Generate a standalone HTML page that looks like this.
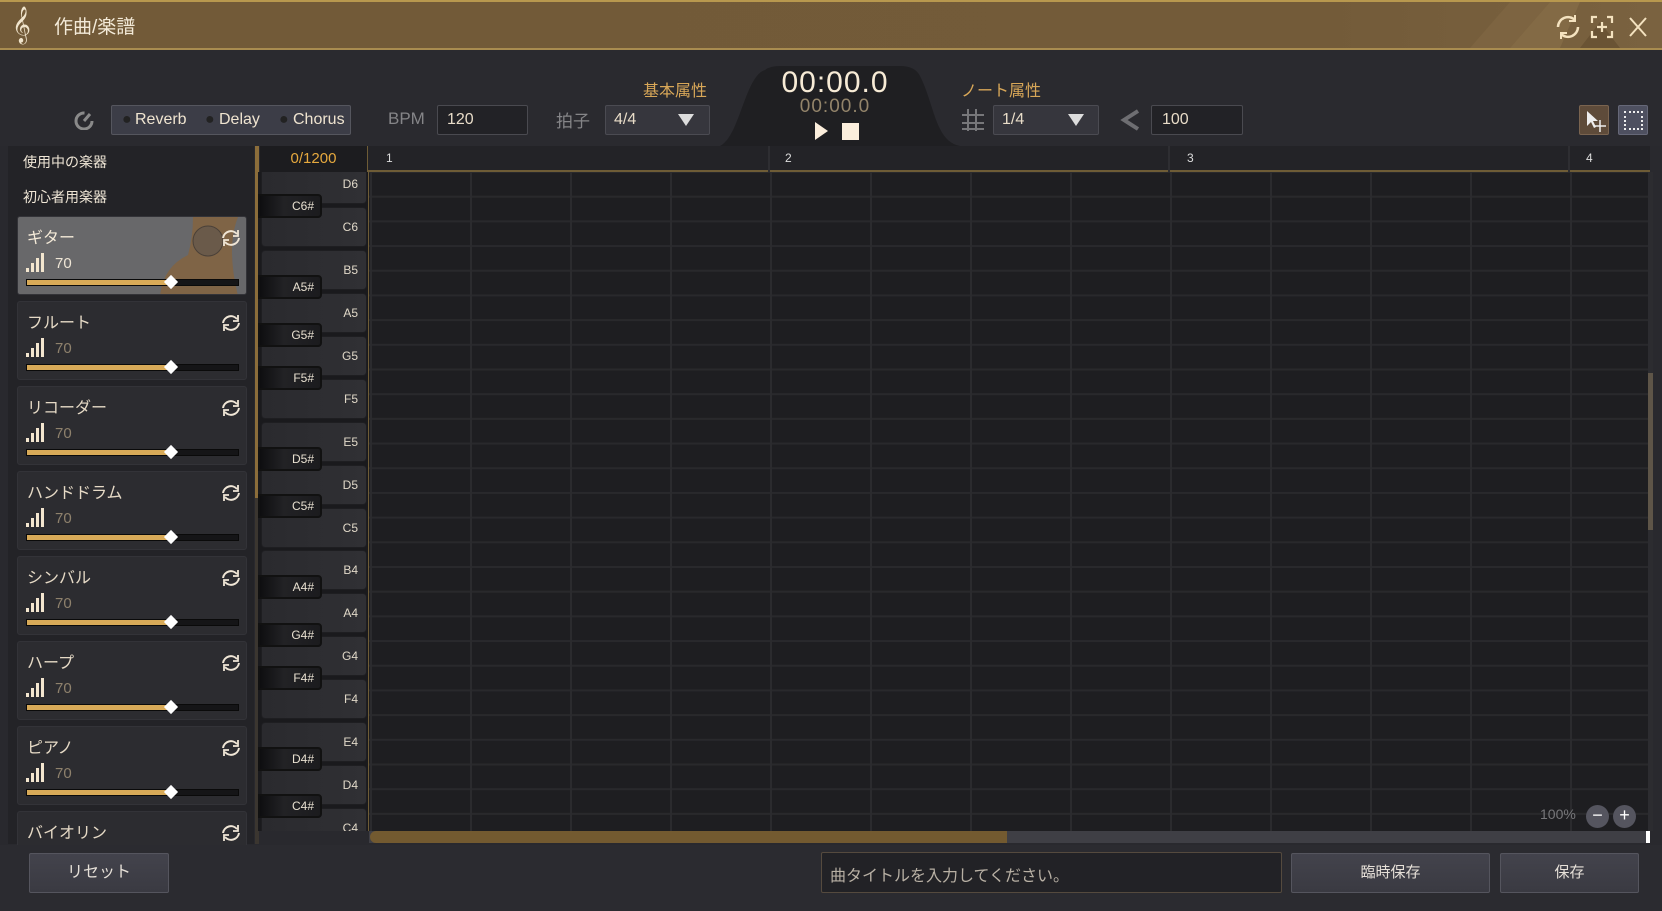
<!DOCTYPE html>
<html><head><meta charset="utf-8">
<style>
*{margin:0;padding:0;box-sizing:border-box}
body{width:1662px;height:911px;overflow:hidden;background:#29292e;font-family:"Liberation Sans","Noto Sans CJK JP",sans-serif;position:relative;color:#e8dcc8}
.a{position:absolute}
.title{left:0;top:0;width:1662px;height:50px;background:linear-gradient(90deg,#725a38,#735b39 80%,#7a6240);border-top:2px solid #b8984e;border-bottom:2px solid #a98c50}
.card{position:absolute;left:17px;width:230px;height:79px;background:#2c2c30;border-radius:3px;border:1px solid #333338;overflow:hidden}
.card .nm{position:absolute;left:9px;top:7px;font-size:16px;color:#e6dac6}
.card .v{position:absolute;left:37px;top:38px;font-size:15px;color:#8e816c}
.wk{position:absolute;left:261px;width:106px;height:40px;background:linear-gradient(90deg,#2a2a2e,#303034);border-radius:4px;border:1px solid #1e1e21;font-size:12px;color:#e0d8c8;text-align:right;padding-right:8px;line-height:38px}
.bk{position:absolute;left:258px;width:64px;height:24px;background:linear-gradient(90deg,#0e0e10,#222225 40%,#1b1b1e);border-radius:0 4px 4px 0;border:2px solid #111;font-size:12px;color:#e8e0d0;text-align:right;padding-right:6px;line-height:20px}
.btn{position:absolute;background:linear-gradient(#43434c,#3a3a42);border:1px solid #55555e;border-radius:2px;color:#e6e0d8;font-size:15px;text-align:center}
</style></head><body>

<div class="a title">
<svg class="a" style="left:1260px;top:0" width="402" height="46"><polygon points="210,46 250,0 290,0 250,46" fill="#7d6441"/><polygon points="250,46 290,0 320,0 300,46" fill="#836a45"/><polygon points="320,46 340,20 360,46" fill="#6a5334"/></svg>
<div class="a" style="left:12px;top:3px;font-size:32px;color:#f0e4cc;font-family:'DejaVu Serif',serif">𝄞</div>
<div class="a" style="left:54px;top:10px;font-size:19px;color:#f3ead8">作曲/楽譜</div>
<svg class="a" style="left:1554px;top:10px" width="100" height="30" fill="none" stroke="#f4e2bf" stroke-width="2.5">
<path d="M4 15a10 10 0 0 1 17-7M24 15a10 10 0 0 1-17 7"/><path d="M21 3v6h-6M7 27v-6h6" stroke-width="2"/>
<path d="M38 11V5h5M58 11V5h-5M38 19v6h5M58 19v6h-5M48 10v10M43 15h10" stroke-width="2.2"/>
<path d="M76 6l16 18M92 6L76 24" stroke-width="2"/></svg>
</div>

<div class="a" style="left:0;top:50px;width:1662px;height:96px;background:#2a2a2f"></div>
<svg class="a" style="left:720px;top:66px" width="240" height="80"><path d="M0 80 C20 70 25 10 45 4 Q50 0 60 0 H180 Q195 0 200 10 C215 40 215 75 240 80Z" fill="#1f1f22"/></svg>
<svg class="a" style="left:74px;top:110px" width="22" height="20"><circle cx="10" cy="11" r="8" fill="none" stroke="#8a8a8a" stroke-width="3" stroke-dasharray="38 12"/><path d="M10 11l6-7" stroke="#8a8a8a" stroke-width="3"/></svg>
<div class="a" style="left:111px;top:105px;width:240px;height:30px;background:#3c3d47;border:1px solid #55565e;border-radius:2px;font-size:16px;color:#efe4d0;line-height:28px">
<span class="a" style="left:10px;top:0;color:#222">●</span><span class="a" style="left:23px">Reverb</span>
<span class="a" style="left:93px;color:#222">●</span><span class="a" style="left:107px">Delay</span>
<span class="a" style="left:167px;color:#222">●</span><span class="a" style="left:181px">Chorus</span></div>
<div class="a" style="left:388px;top:109px;font-size:17px;color:#858588">BPM</div>
<div class="a" style="left:437px;top:105px;width:91px;height:30px;background:#222226;border:1px solid #4a4a50;border-radius:2px;font-size:16px;color:#e8dcc8;padding:5px 9px">120</div>
<div class="a" style="left:556px;top:107px;font-size:17px;color:#858588">拍子</div>
<div class="a" style="left:605px;top:105px;width:105px;height:30px;background:#36363d;border:1px solid #4b4b52;border-radius:2px;font-size:16px;color:#e8dcc8;padding:5px 8px">4/4<span class="a" style="left:72px;top:8px;width:0;height:0;border-left:8px solid transparent;border-right:8px solid transparent;border-top:12px solid #ddd"></span></div>
<div class="a" style="left:643px;top:77px;font-size:16px;color:#d8a758">基本属性</div>
<div class="a" style="left:735px;top:66px;width:200px;text-align:center;font-size:30px;color:#f7ebd6;letter-spacing:1px">00:00.0</div>
<div class="a" style="left:735px;top:96px;width:200px;text-align:center;font-size:19px;color:#93846a;letter-spacing:1px">00:00.0</div>
<div class="a" style="left:815px;top:122px;width:0;height:0;border-top:9px solid transparent;border-bottom:9px solid transparent;border-left:13px solid #fbeedc"></div>
<div class="a" style="left:842px;top:123px;width:17px;height:17px;background:#fbeedc"></div>
<div class="a" style="left:961px;top:77px;font-size:16px;color:#d8a758">ノート属性</div>
<svg class="a" style="left:962px;top:109px" width="22" height="22" stroke="#77777a" stroke-width="2"><path d="M6 0v22M14 0v22M0 6h22M0 14h22M0 20h22"/></svg>
<div class="a" style="left:993px;top:105px;width:106px;height:30px;background:#36363d;border:1px solid #4b4b52;border-radius:2px;font-size:16px;color:#e8dcc8;padding:5px 8px">1/4<span class="a" style="left:74px;top:8px;width:0;height:0;border-left:8px solid transparent;border-right:8px solid transparent;border-top:12px solid #ddd"></span></div>
<svg class="a" style="left:1119px;top:109px" width="22" height="22"><path d="M19 2L5 11l14 9" fill="none" stroke="#6e6e72" stroke-width="4"/></svg>
<div class="a" style="left:1151px;top:105px;width:92px;height:30px;background:#222226;border:1px solid #4a4a50;border-radius:2px;font-size:16px;color:#e8dcc8;padding:5px 10px">100</div>
<div class="a" style="left:1579px;top:105px;width:30px;height:30px;background:#5e4b3a;border:1px solid #7a6450;border-radius:2px"><svg width="30" height="30"><path d="M7 5v15l4-4 3 6 2-1-3-6h5z" fill="#eee"/><path d="M20 14v12M14 20h12" stroke="#eee" stroke-width="1.5"/></svg></div>
<div class="a" style="left:1618px;top:105px;width:30px;height:30px;background:#4e5060;border:1px solid #666878;border-radius:2px"><div class="a" style="left:5px;top:5px;width:19px;height:19px;border:2px dotted #eee"></div></div>

<div class="a" style="left:8px;top:146px;width:246px;height:698px;background:#232327"></div>
<div class="a" style="left:255px;top:146px;width:4px;height:698px;background:#3b3630"></div>
<div class="a" style="left:255px;top:146px;width:4px;height:352px;background:#8b6d3a"></div>
<div class="a" style="left:23px;top:152px;font-size:14px;color:#efe6d6">使用中の楽器</div>
<div class="a" style="left:23px;top:187px;font-size:14px;color:#efe6d6">初心者用楽器</div>

<div class="a" style="left:0;top:0;width:262px;height:845px;overflow:hidden">
<div class="card" style="top:216px;background:#68686a"><svg style="position:absolute;left:120px;top:0" width="110" height="79"><path d="M55 0 H100 Q88 30 100 79 H22 Q25 50 50 38 Q55 20 55 0Z" fill="#7f6446"/><circle cx="70" cy="24" r="15" fill="#6a5a4a" stroke="#4a4038"/></svg><div class="nm" style="color:#f4ead8">ギター</div><div class="v" style="color:#efe6d6">70</div></div>
<div class="card" style="top:301px"><div class="nm">フルート</div><div class="v">70</div></div>
<div class="card" style="top:386px"><div class="nm">リコーダー</div><div class="v">70</div></div>
<div class="card" style="top:471px"><div class="nm">ハンドドラム</div><div class="v">70</div></div>
<div class="card" style="top:556px"><div class="nm">シンバル</div><div class="v">70</div></div>
<div class="card" style="top:641px"><div class="nm">ハープ</div><div class="v">70</div></div>
<div class="card" style="top:726px"><div class="nm">ピアノ</div><div class="v">70</div></div>
<div class="card" style="top:811px"><div class="nm">バイオリン</div></div>
</div>
<div class="a" style="left:0;top:0;width:262px;height:845px;overflow:hidden;pointer-events:none">
<svg class="a" style="left:0;top:0" width="262" height="845">
<defs><g id="c">
<rect x="26" y="52" width="3" height="4" fill="#f3e6cf"/><rect x="31" y="47" width="3" height="9" fill="#f3e6cf"/><rect x="36" y="42" width="3" height="14" fill="#f3e6cf"/><rect x="41" y="37" width="3" height="19" fill="#f3e6cf"/>
<rect x="26.5" y="63.5" width="212" height="6" fill="#151517" stroke="#0a0a0a"/><rect x="27" y="64" width="145" height="5" fill="#d8aa58"/>
<rect x="166" y="61" width="10" height="10" fill="#fff" transform="rotate(45 171 66)"/>
<g fill="none" stroke="#f0e6d6" stroke-width="2"><path d="M223 22a8 8 0 0 1 14-4M239 22a8 8 0 0 1-14 4"/></g>
<path d="M238 14v6h-5M224 30v-6h5" fill="none" stroke="#f0e6d6" stroke-width="1.8"/>
</g></defs>
<use href="#c" y="216"/><use href="#c" y="301"/><use href="#c" y="386"/><use href="#c" y="471"/><use href="#c" y="556"/><use href="#c" y="641"/><use href="#c" y="726"/><use href="#c" y="811"/>
</svg></div>

<div class="a" style="left:260px;top:146px;width:1390px;height:26px;background:#232327;border-bottom:2px solid #6e5c36"></div>
<div class="a" style="left:260px;top:146px;width:108px;height:26px;background:#1c1c1f;border-right:1px solid #6e5c36;color:#e6a93e;font-size:15px;text-align:center;line-height:26px">0/1200</div>
<div class="a" style="left:386px;top:151px;font-size:12px;color:#ddd">1</div>
<div class="a" style="left:785px;top:151px;font-size:12px;color:#ddd">2</div>
<div class="a" style="left:1187px;top:151px;font-size:12px;color:#ddd">3</div>
<div class="a" style="left:1586px;top:151px;font-size:12px;color:#ddd">4</div>
<div class="a" style="left:768px;top:146px;width:2px;height:26px;background:#2e2e32"></div>
<div class="a" style="left:1168px;top:146px;width:2px;height:26px;background:#2e2e32"></div>
<div class="a" style="left:1568px;top:146px;width:2px;height:26px;background:#2e2e32"></div>

<div class="a" style="left:368px;top:172px;width:1280px;height:659px;background-color:#1e1e21;background-image:linear-gradient(90deg,#2b2b2e 2px,transparent 2px),linear-gradient(#29292c 2px,transparent 2px);background-size:100px 100%,100% 24.7px;background-position:1px 0,0 -1px;border-left:1px solid #6e5c36"></div>
<div class="a" style="left:1648px;top:172px;width:5px;height:659px;background:#2c2c30"></div>
<div class="a" style="left:1648px;top:373px;width:5px;height:157px;background:#5e5548"></div>

<div class="a" style="left:258px;top:172px;width:110px;height:659px;background:#1a1a1d;overflow:hidden">
<div style="position:absolute;left:-258px;top:-172px">
<div class="wk" style="top:164px">D6</div>
<div class="wk" style="top:207px">C6</div>
<div class="wk" style="top:250px">B5</div>
<div class="wk" style="top:293px">A5</div>
<div class="wk" style="top:336px">G5</div>
<div class="wk" style="top:379px">F5</div>
<div class="wk" style="top:422px">E5</div>
<div class="wk" style="top:465px">D5</div>
<div class="wk" style="top:508px">C5</div>
<div class="wk" style="top:550px">B4</div>
<div class="wk" style="top:593px">A4</div>
<div class="wk" style="top:636px">G4</div>
<div class="wk" style="top:679px">F4</div>
<div class="wk" style="top:722px">E4</div>
<div class="wk" style="top:765px">D4</div>
<div class="wk" style="top:808px">C4</div>
<div class="bk" style="top:194px">C6#</div>
<div class="bk" style="top:275px">A5#</div>
<div class="bk" style="top:323px">G5#</div>
<div class="bk" style="top:366px">F5#</div>
<div class="bk" style="top:447px">D5#</div>
<div class="bk" style="top:494px">C5#</div>
<div class="bk" style="top:575px">A4#</div>
<div class="bk" style="top:623px">G4#</div>
<div class="bk" style="top:666px">F4#</div>
<div class="bk" style="top:747px">D4#</div>
<div class="bk" style="top:794px">C4#</div>
</div></div>

<div class="a" style="left:1540px;top:806px;font-size:14px;color:#77777a">100%</div>
<div class="a" style="left:1586px;top:805px;width:23px;height:23px;border-radius:50%;background:#55555f;color:#fff;font-size:18px;text-align:center;line-height:21px">−</div>
<div class="a" style="left:1613px;top:805px;width:23px;height:23px;border-radius:50%;background:#55555f;color:#fff;font-size:18px;text-align:center;line-height:21px">+</div>

<div class="a" style="left:369px;top:831px;width:1279px;height:12px;background:#3f3f45"></div>
<div class="a" style="left:370px;top:831px;width:637px;height:12px;background:#735a30;border-radius:6px 0 0 6px"></div>
<div class="a" style="left:1646px;top:831px;width:4px;height:12px;background:#fff"></div>

<div class="a" style="left:0;top:845px;width:1662px;height:66px;background:#2b2b30"></div>
<div class="btn" style="left:29px;top:853px;width:140px;height:40px;line-height:38px;font-size:16px">リセット</div>
<div class="a" style="left:821px;top:852px;width:461px;height:41px;background:#222226;border:1px solid #554a3e;border-radius:2px;font-size:16px;color:#b8b0a4;padding:9px 8px">曲タイトルを入力してください。</div>
<div class="btn" style="left:1291px;top:853px;width:199px;height:40px;line-height:38px">臨時保存</div>
<div class="btn" style="left:1500px;top:853px;width:139px;height:40px;line-height:38px">保存</div>
</body></html>
